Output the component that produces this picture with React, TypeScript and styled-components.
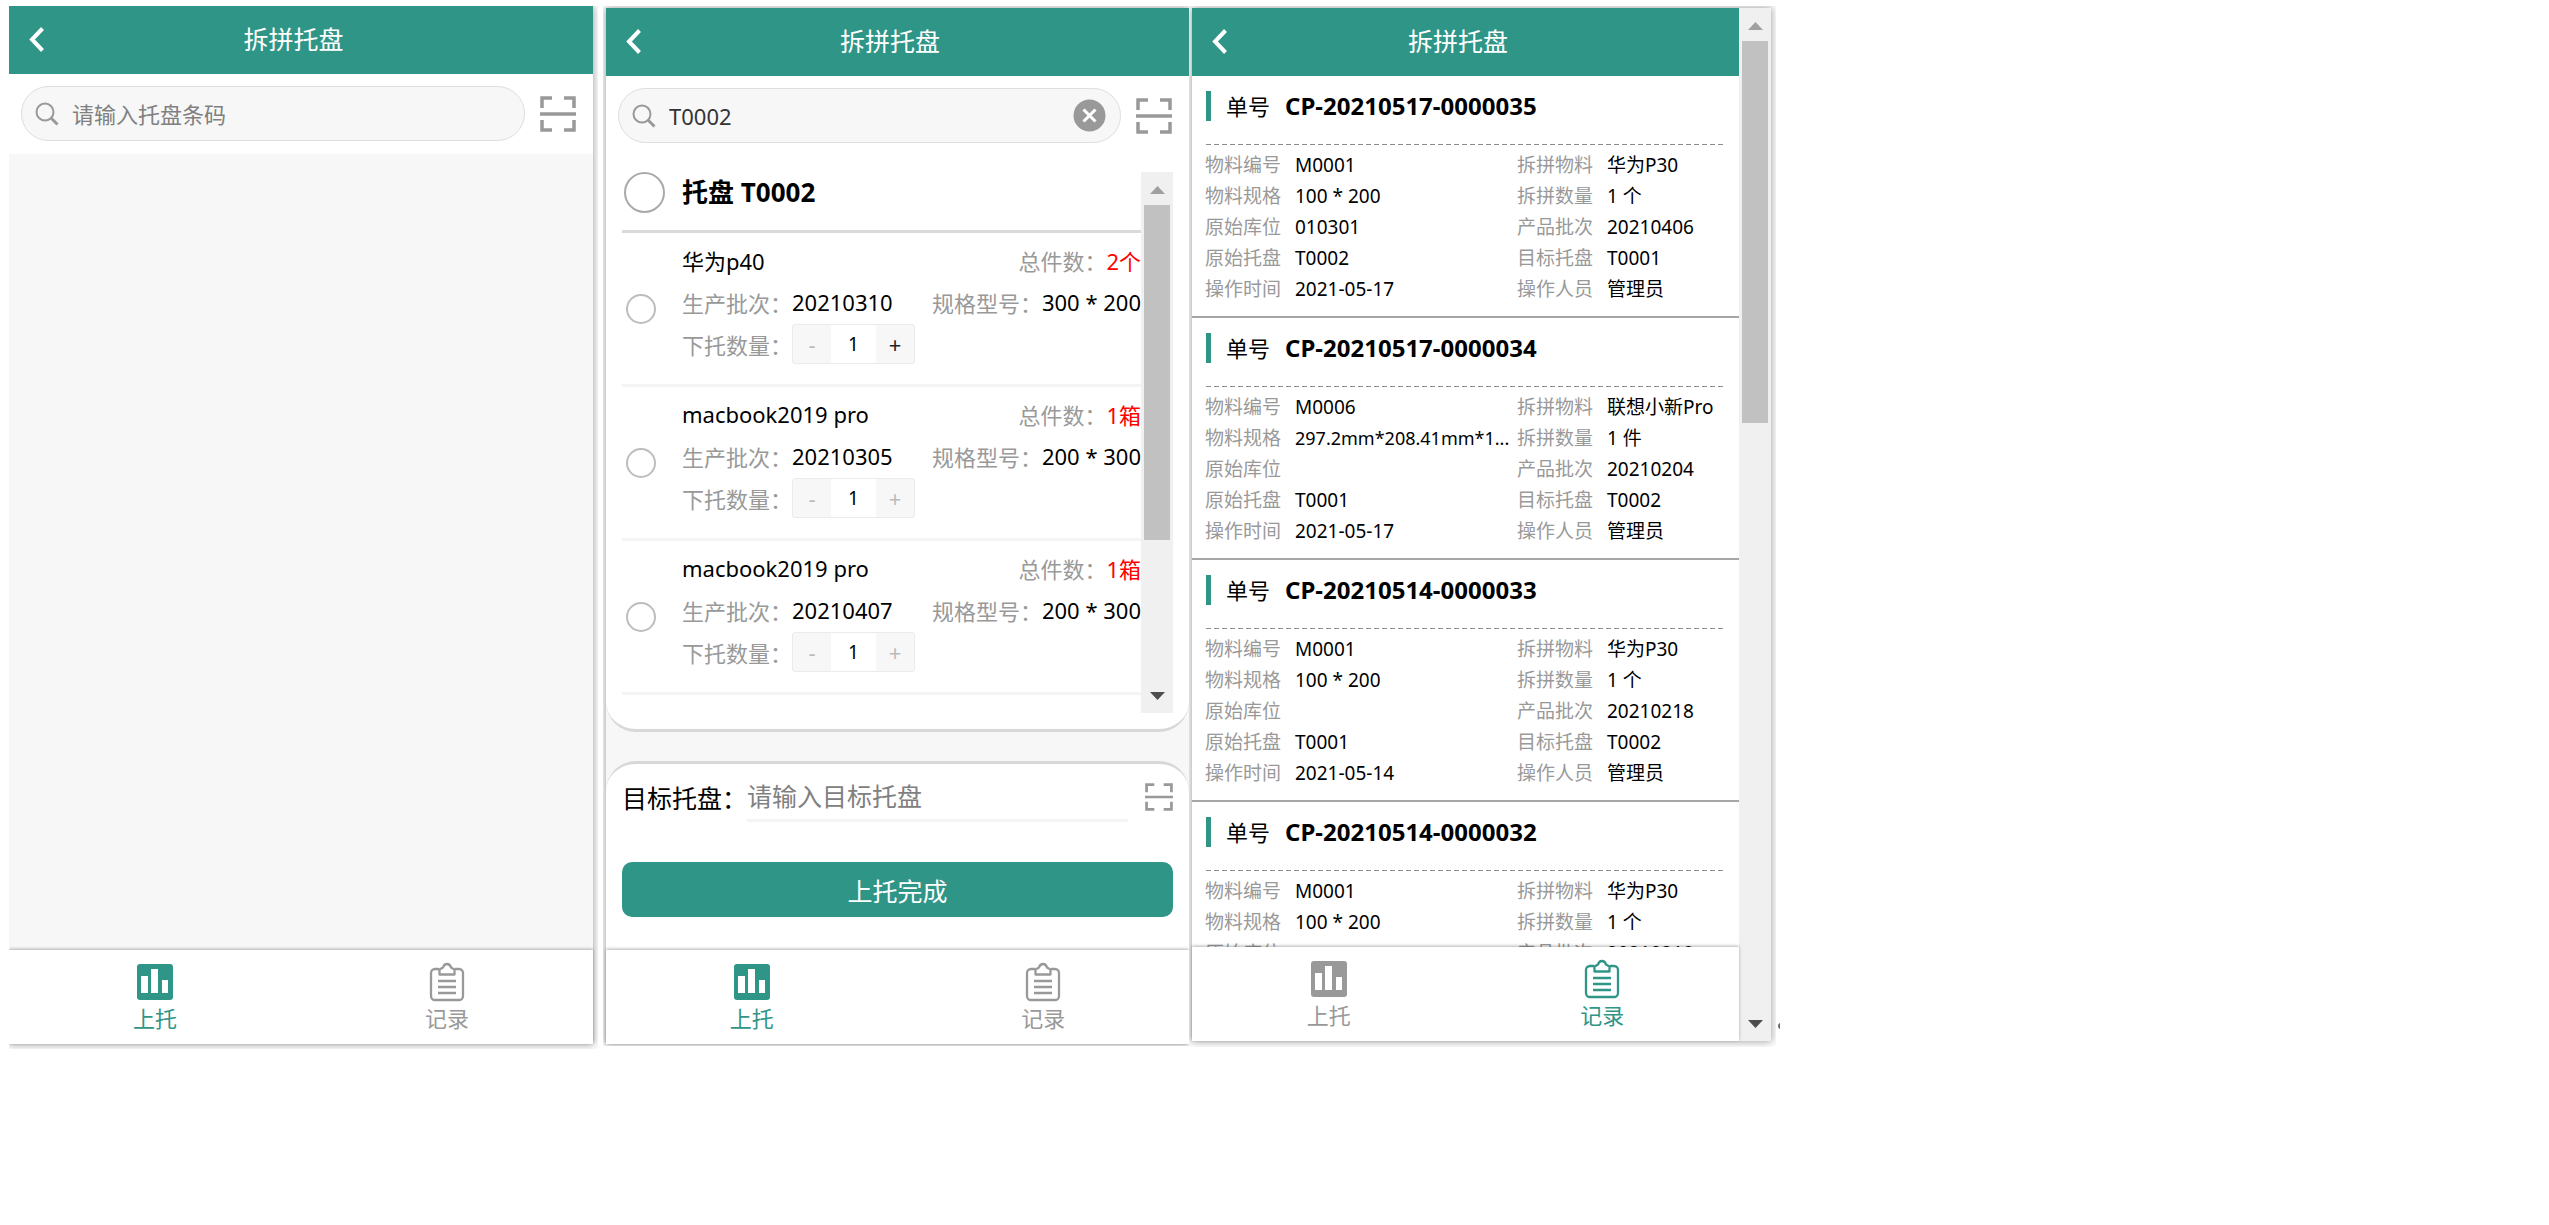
import React, { useState } from 'react';
import styled, { createGlobalStyle } from 'styled-components';

const TEAL = '#2f9587';
const MUTED = '#999';

const GlobalStyle = createGlobalStyle`
  *, *::before, *::after { box-sizing: border-box; }
  body {
    margin: 0;
    background: #fff;
    color: #000;
    font-family: "Noto Sans", "Noto Sans CJK SC", sans-serif;
    font-size: 22px;
  }
  button, input { font-family: inherit; font-size: inherit; color: inherit; margin: 0; padding: 0; }
  button { border: 0; background: none; cursor: pointer; }
  dl, dt, dd, h1, h2, ul { margin: 0; padding: 0; }
  svg { display: block; flex: none; }
`;

const Stage = styled.div`
  display: flex;
  align-items: flex-start;
  padding: 6px 9px;
`;

const Frame = styled.section<{ $pad: string; $width: number; $after?: number }>`
  flex: 0 1 ${(p) => p.$width}px;
  min-width: 0;
  padding: ${(p) => p.$pad};
  margin-right: ${(p) => p.$after ?? 0}px;
  overflow: hidden;
`;

const Phone = styled.div<{ $trim: number }>`
  display: flex;
  height: calc(100vh - ${(p) => p.$trim}px);
  min-height: 900px;
  background: #f7f7f7;
  box-shadow: 0 0 8px 1px rgba(0, 0, 0, 0.35);
`;

const Column = styled.div`
  flex: 1;
  min-width: 0;
  display: flex;
  flex-direction: column;
`;

const Header = styled.header`
  flex: none;
  display: flex;
  align-items: center;
  height: 68px;
  padding-bottom: 2px;
  background: ${TEAL};
  color: #fff;
`;

const BackButton = styled.button`
  width: 54px;
  height: 48px;
  padding-left: 19px;
  color: #fff;
`;

const Title = styled.h1`
  flex: 1;
  padding-right: 69px;
  font-size: 25px;
  line-height: 36px;
  font-weight: 400;
  text-align: center;
`;

const SearchBar = styled.div`
  display: flex;
  align-items: center;
  gap: 15px;
  padding: 12px 17px 13px 12px;
  background: #fff;
`;

const SearchBox = styled.label`
  flex: 1;
  min-width: 0;
  height: 55px;
  display: flex;
  align-items: center;
  gap: 13px;
  padding: 0 14px 0 13px;
  border: 1px solid #dedede;
  border-radius: 28px;
  background: #f7f7f7;
`;

const SearchInput = styled.input`
  flex: 1;
  min-width: 0;
  height: 36px;
  border: 0;
  outline: 0;
  background: transparent;
  color: #333;
  &::placeholder { color: #808080; opacity: 1; }
`;

const IconButton = styled.button`
  flex: none;
  color: ${MUTED};
`;

const Filler = styled.div`
  flex: 1;
`;

const TabBar = styled.nav`
  flex: none;
  position: relative;
  display: flex;
  height: 94px;
  background: #fff;
  box-shadow: 0 -1px 3px rgba(0, 0, 0, 0.3);
`;

const Tab = styled.a<{ $active: boolean }>`
  flex: 1;
  display: flex;
  flex-direction: column;
  align-items: center;
  gap: 4px;
  padding-top: 12px;
  color: ${(p) => (p.$active ? TEAL : MUTED)};
  line-height: 24px;
  text-decoration: none;
`;

const ListCard = styled.div`
  flex: none;
  border-bottom: 3px solid #d8d8d8;
  border-radius: 0 0 30px 30px;
  background: #fff;
`;

const ListArea = styled.div`
  display: flex;
  height: 541px;
  margin: 16px;
`;

const ListMain = styled.div`
  flex: 1;
  min-width: 0;
  overflow: hidden;
`;

const PalletHead = styled.div`
  display: flex;
  height: 61px;
  gap: 17px;
  padding-left: 2px;
  border-bottom: 3px solid #dadada;
`;

const PalletName = styled.label`
  font-size: 26px;
  line-height: 41px;
  font-weight: 700;
`;

const RoundCheck = styled.input<{ $size: number; $tone: string }>`
  appearance: none;
  flex: none;
  width: ${(p) => p.$size}px;
  height: ${(p) => p.$size}px;
  border: 2px solid ${(p) => p.$tone};
  border-radius: 50%;
  background: #fff;
  &:checked { border-color: ${TEAL}; background: ${TEAL}; }
`;

const Items = styled.ul`
  list-style: none;
`;

const Item = styled.li`
  display: flex;
  align-items: center;
  gap: 26px;
  height: 154px;
  padding-left: 4px;
  border-bottom: 3px solid #f4f4f4;
`;

const ItemBody = styled.div`
  flex: 1;
  min-width: 0;
  padding-bottom: 14px;
`;

const Line = styled.div`
  display: flex;
  align-items: center;
  justify-content: space-between;
  height: 42px;
  white-space: nowrap;
`;

const Field = styled.div`
  display: flex;
  align-items: center;
`;

const Muted = styled.span`
  color: ${MUTED};
`;

const Danger = styled.span`
  color: #f00;
`;

const Stepper = styled.div`
  display: grid;
  grid-template-columns: 38px 45px 38px;
  height: 40px;
  border: 1px solid #ebebeb;
  border-radius: 3px;
  background: #f7f7f7;
`;

const StepButton = styled.button`
  color: #222;
  line-height: 36px;
  &:disabled { color: #bbb; cursor: default; }
`;

const StepInput = styled.input`
  min-width: 0;
  border: 0;
  outline: 0;
  background: #fff;
  font-size: 19px;
  text-align: center;
`;

const TargetCard = styled.form`
  flex: 1;
  margin-top: 29px;
  padding: 10px 16px 0;
  border-top: 3px solid #d8d8d8;
  border-radius: 30px 30px 0 0;
  background: #fff;
`;

const TargetRow = styled.div`
  display: flex;
  align-items: center;
  height: 46px;
  font-size: 25px;
`;

const TargetInput = styled.input`
  flex: 1;
  min-width: 0;
  height: 50px;
  margin-right: 17px;
  border: 0;
  border-bottom: 3px solid #f4f4f4;
  outline: 0;
  background: transparent;
  &::placeholder { color: #808080; opacity: 1; }
`;

const SubmitButton = styled.button`
  width: 100%;
  height: 55px;
  margin-top: 42px;
  border-radius: 10px;
  background: ${TEAL};
  color: #fff;
  font-size: 25px;
`;

const Records = styled.div`
  flex: 1;
  min-height: 0;
  overflow: hidden;
  background: #fff;
`;

const Record = styled.article`
  padding-bottom: 11px;
  border-bottom: 2px solid #a6a6a6;
`;

const RecordHead = styled.h2`
  display: flex;
  align-items: center;
  gap: 15px;
  padding: 15px 14px 23px;
  font-size: 22px;
  line-height: 30px;
  font-weight: 400;
  &::before { content: ""; width: 5px; height: 30px; background: ${TEAL}; }
`;

const RecordNumber = styled.strong`
  font-size: 24px;
`;

const Dashes = styled.div`
  height: 1px;
  margin: 0 14px 5px;
  background: repeating-linear-gradient(90deg, #8c8c8c 0 5px, transparent 5px 8px);
`;

const Details = styled.dl`
  display: grid;
  grid-template-columns: minmax(0, 3fr) minmax(0, 2fr);
  padding: 0 14px 0 13px;
  font-size: 19px;
  line-height: 31px;
`;

const Detail = styled.div`
  display: flex;
  height: 31px;
  white-space: nowrap;
`;

const Term = styled.dt`
  flex: none;
  width: 90px;
  color: ${MUTED};
`;

const Value = styled.dd<{ $long: boolean }>`
  font-size: ${(p) => (p.$long ? 18 : 19)}px;
`;

const Track = styled.div`
  flex: none;
  display: flex;
  flex-direction: column;
  align-items: center;
  width: 32px;
  background: #f0f0f0;
`;

const Arrow = styled.svg`
  width: 15px;
  height: 33px;
`;

const Thumb = styled.div<{ $size: number }>`
  width: 26px;
  height: ${(p) => p.$size}%;
  background: #c1c1c1;
`;

const EdgeMark = styled.svg`
  align-self: flex-end;
  margin: 0 0 20px 2px;
`;

function ScanIcon({ size }: { size: number }) {
  return (
    <svg width={size} height={size} viewBox="0 0 36 36" fill="none" stroke="currentColor" strokeWidth="3.5">
      <path d="M2 12V2H12M24 2h10V12M2 24v10H12M24 34h10V24M0 18h36" />
    </svg>
  );
}

function SearchIcon() {
  return (
    <svg width="24" height="24" viewBox="0 0 24 24" fill="none" stroke="#999" strokeWidth="2">
      <circle cx="10" cy="10" r="8.500" />
      <path d="M16 16l6.500 6.500" strokeWidth="3" />
    </svg>
  );
}

function ClearIcon() {
  return (
    <svg width="33" height="33" viewBox="0 0 33 33">
      <circle cx="16.500" cy="16.500" r="16" fill="#999" />
      <path d="M10.500 10.500l12 12M22.500 10.500l-12 12" stroke="#fff" strokeWidth="3" />
    </svg>
  );
}

function ChartIcon() {
  return (
    <svg width="36" height="40" viewBox="0 0 36 40">
      <rect y="2" width="36" height="36" rx="3" fill="currentColor" />
      <path d="M4 14h7v17H4zM14 7h7v24h-7zM25 18h6v13h-6z" fill="#fff" />
    </svg>
  );
}

function ClipboardIcon() {
  return (
    <svg width="36" height="40" viewBox="0 0 36 40" fill="none" stroke="currentColor" strokeWidth="2.300">
      <path d="M10 7H6a4 4 0 0 0-4 4v23a4 4 0 0 0 4 4h24a4 4 0 0 0 4-4V11a4 4 0 0 0-4-4h-4" />
      <path d="M10.500 12.500V7.500L14 5.500Q15 2 18 2T22 5.500L25.500 7.500v5z" strokeLinejoin="round" />
      <path d="M9 19h18M9 25h18M9 31h18" />
    </svg>
  );
}

function TopBar() {
  return (
    <Header>
      <BackButton type="button" aria-label="返回">
        <svg width="17" height="25" viewBox="0 0 17 25" fill="none" stroke="#fff" strokeWidth="4">
          <path d="M14.500 1.500L4 12.500l10.500 11" />
        </svg>
      </BackButton>
      <Title>拆拼托盘</Title>
    </Header>
  );
}

function Tabs({ active }: { active: 'load' | 'log' }) {
  return (
    <TabBar>
      <Tab href="#load" $active={active === 'load'}>
        <ChartIcon />
        上托
      </Tab>
      <Tab href="#log" $active={active === 'log'}>
        <ClipboardIcon />
        记录
      </Tab>
    </TabBar>
  );
}

function Search({ initial = '' }: { initial?: string }) {
  const [value, setValue] = useState(initial);
  return (
    <SearchBar>
      <SearchBox>
        <SearchIcon />
        <SearchInput
          aria-label="托盘条码"
          placeholder="请输入托盘条码"
          value={value}
          onChange={(e) => setValue(e.target.value)}
        />
        {value && (
          <IconButton type="button" aria-label="清除" onClick={() => setValue('')}>
            <ClearIcon />
          </IconButton>
        )}
      </SearchBox>
      <IconButton type="button" aria-label="扫码">
        <ScanIcon size={36} />
      </IconButton>
    </SearchBar>
  );
}

function Scrollbar({ thumb }: { thumb: number }) {
  return (
    <Track aria-hidden="true">
      <Arrow viewBox="0 0 15 33">
        <path d="M0 22L7.500 14L15 22z" fill="#a0a0a0" />
      </Arrow>
      <Thumb $size={thumb} />
      <Filler />
      <Arrow viewBox="0 0 15 33">
        <path d="M0 12L7.500 20L15 12z" fill="#4d4d4d" />
      </Arrow>
    </Track>
  );
}

interface Goods {
  name: string;
  total: string;
  batch: string;
  spec: string;
  max: number;
}

const GOODS: Goods[] = [
  { name: '华为p40', total: '2个', batch: '20210310', spec: '300 * 200', max: 2 },
  { name: 'macbook2019 pro', total: '1箱', batch: '20210305', spec: '200 * 300', max: 1 },
  { name: 'macbook2019 pro', total: '1箱', batch: '20210407', spec: '200 * 300', max: 1 },
];

function GoodsItem({ goods }: { goods: Goods }) {
  const [count, setCount] = useState(1);
  return (
    <Item>
      <RoundCheck type="checkbox" $size={30} $tone="#bdbdbd" aria-label={`${goods.name} ${goods.batch}`} />
      <ItemBody>
        <Line>
          <span>{goods.name}</span>
          <Field>
            <Muted>总件数：</Muted>
            <Danger>{goods.total}</Danger>
          </Field>
        </Line>
        <Line>
          <Field>
            <Muted>生产批次：</Muted>
            {goods.batch}
          </Field>
          <Field>
            <Muted>规格型号：</Muted>
            {goods.spec}
          </Field>
        </Line>
        <Line>
          <Field>
            <Muted>下托数量：</Muted>
            <Stepper>
              <StepButton type="button" aria-label="减少" disabled={count <= 1} onClick={() => setCount(count - 1)}>
                -
              </StepButton>
              <StepInput
                aria-label="下托数量"
                inputMode="numeric"
                value={count}
                onChange={(e) => setCount(Math.min(goods.max, Math.max(1, Number(e.target.value) || 1)))}
              />
              <StepButton type="button" aria-label="增加" disabled={count >= goods.max} onClick={() => setCount(count + 1)}>
                +
              </StepButton>
            </Stepper>
          </Field>
        </Line>
      </ItemBody>
    </Item>
  );
}

const LABELS = [
  '物料编号', '拆拼物料',
  '物料规格', '拆拼数量',
  '原始库位', '产品批次',
  '原始托盘', '目标托盘',
  '操作时间', '操作人员',
];

const RECORDS = [
  {
    no: 'CP-20210517-0000035',
    values: ['M0001', '华为P30', '100 * 200', '1 个', '010301', '20210406', 'T0002', 'T0001', '2021-05-17', '管理员'],
  },
  {
    no: 'CP-20210517-0000034',
    values: ['M0006', '联想小新Pro', '297.2mm*208.41mm*1...', '1 件', '', '20210204', 'T0001', 'T0002', '2021-05-17', '管理员'],
  },
  {
    no: 'CP-20210514-0000033',
    values: ['M0001', '华为P30', '100 * 200', '1 个', '', '20210218', 'T0001', 'T0002', '2021-05-14', '管理员'],
  },
  {
    no: 'CP-20210514-0000032',
    values: ['M0001', '华为P30', '100 * 200', '1 个', '', '20210218'],
  },
];

export default function App() {
  return (
    <>
      <GlobalStyle />
      <Stage>
        <Frame $width={589} $pad="0 5px 5px 0" $after={5}>
          <Phone $trim={187}>
            <Column>
              <TopBar />
              <Search />
              <Filler />
              <Tabs active="load" />
            </Column>
          </Phone>
        </Frame>

        <Frame $width={586} $pad="2px 0 2px 3px">
          <Phone $trim={189}>
            <Column>
              <TopBar />
              <ListCard>
                <Search initial="T0002" />
                <ListArea>
                  <ListMain>
                    <PalletHead>
                      <RoundCheck id="pallet" type="checkbox" $size={41} $tone="#aaa" />
                      <PalletName htmlFor="pallet">托盘 T0002</PalletName>
                    </PalletHead>
                    <Items>
                      {GOODS.map((g) => (
                        <GoodsItem key={g.batch} goods={g} />
                      ))}
                    </Items>
                  </ListMain>
                  <Scrollbar thumb={62} />
                </ListArea>
              </ListCard>
              <TargetCard onSubmit={(e) => e.preventDefault()}>
                <TargetRow>
                  <label htmlFor="target">目标托盘：</label>
                  <TargetInput id="target" placeholder="请输入目标托盘" />
                  <IconButton type="button" aria-label="扫码">
                    <ScanIcon size={28} />
                  </IconButton>
                </TargetRow>
                <SubmitButton type="submit">上托完成</SubmitButton>
              </TargetCard>
              <Tabs active="load" />
            </Column>
          </Phone>
        </Frame>

        <Frame $width={587} $pad="2px 5px 6px 3px">
          <Phone $trim={192}>
            <Column>
              <TopBar />
              <Records>
                {RECORDS.map((r) => (
                  <Record key={r.no}>
                    <RecordHead>
                      单号
                      <RecordNumber>{r.no}</RecordNumber>
                    </RecordHead>
                    <Dashes />
                    <Details>
                      {r.values.map((v, i) => (
                        <Detail key={LABELS[i]}>
                          <Term>{LABELS[i]}</Term>
                          <Value $long={v.length > 18}>{v}</Value>
                        </Detail>
                      ))}
                    </Details>
                  </Record>
                ))}
              </Records>
              <Tabs active="log" />
            </Column>
            <Scrollbar thumb={37} />
          </Phone>
        </Frame>
        <EdgeMark width="2" height="6" viewBox="0 0 2 6" aria-hidden="true">
          <circle cx="3" cy="3" r="3" fill="#666" />
        </EdgeMark>
      </Stage>
    </>
  );
}
